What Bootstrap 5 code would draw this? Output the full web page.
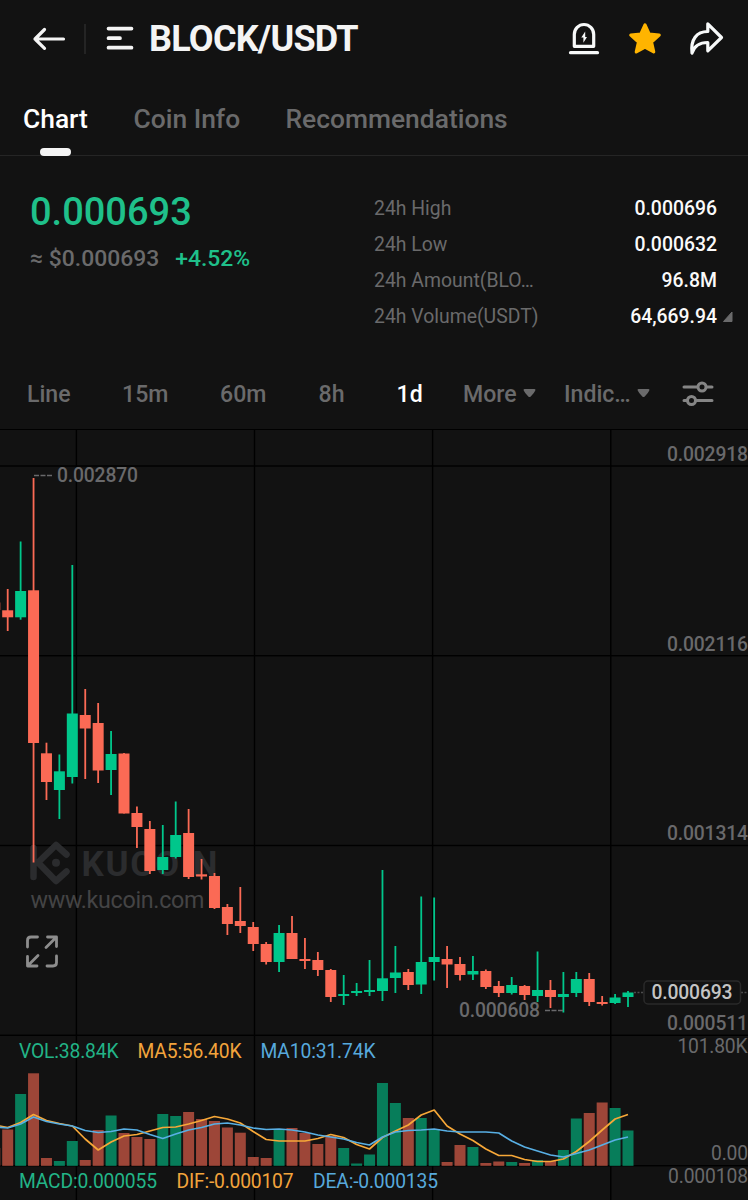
<!DOCTYPE html>
<html lang="en">
<head>
<meta charset="utf-8">
<meta name="viewport" content="width=device-width, initial-scale=1">
<title>BLOCK/USDT</title>
<link href="https://cdn.jsdelivr.net/npm/bootstrap@5.3.0/dist/css/bootstrap.min.css" rel="stylesheet">
<style>
  body { background:#121212; color:#f4f4f4; font-family:Roboto, "Liberation Sans", sans-serif; width:748px; height:1200px; overflow:hidden; }
  svg { display:block; flex:none; }
  .up { color:#1fc08a; }
  .dim { color:#6a6a6b; }
  .topbar { height:78px; padding-left:32px; padding-right:24px; }
  .rule { width:2px; height:30px; background:#242424; margin:0 20px; }
  .pair { font-size:36px; font-weight:700; letter-spacing:-.75px; line-height:42px; margin:0 0 0 15px; }
  .tabs { height:78px; border-bottom:1px solid #252525; font-size:26.4px; font-weight:500; line-height:32px; padding:25px 0 0 23px; }
  .tabs a { color:#6a6a6b; text-decoration:none; white-space:nowrap; }
  .tabs a.active { color:#fff; position:relative; }
  .tabs a.active::after { content:""; position:absolute; left:17px; top:45px; width:31px; height:8px; border-radius:4px; background:#f4f4f4; }
  .summary { height:202px; padding:35px 15px 0 30px; }
  .last { font-size:38px; font-weight:500; line-height:42px; }
  .approx { font-size:22.9px; line-height:28px; margin-top:12px; font-weight:500; }
  .stats { width:359px; font-size:19.4px; line-height:36px; }
  .stats b { font-weight:500; color:#fafafa; }
  .stats .val { margin-right:16px; }
  .periods { height:71px; padding:2px 0 0 27px; font-size:23.1px; font-weight:500; line-height:69px; white-space:nowrap; }
</style>
</head>
<body>
<header class="topbar d-flex align-items-center">
  <svg width="34" height="30" viewBox="0 0 34 30" fill="none" stroke="#f4f4f4" stroke-width="3.2" stroke-linecap="round" stroke-linejoin="round"><path d="M31.500 15H3M12.500 5.500 3 15l9.500 9.300"/></svg>
  <span class="rule" style="margin-left:18px"></span>
  <svg width="28" height="28" viewBox="0 0 28 28" stroke="#f4f4f4" stroke-width="3.700" stroke-linecap="round"><path d="M2.500 3.600H25.500M2.500 13.200H14M2.500 22.700H25.500"/></svg>
  <h1 class="pair">BLOCK/USDT</h1>
  <div class="d-flex ms-auto align-items-center">
    <svg width="32" height="38" viewBox="0 0 32 38" fill="none" stroke="#f7f9f9" stroke-linecap="round"><path d="M6.300 26.300V14.500a9.700 10 0 0 1 19.400 0v11.800z" stroke-width="3.200" stroke-linejoin="round"/><path d="M2.500 32.700h27" stroke-width="3.200"/><path d="M17.200 11.500 13.300 17.500h2.100v5.300l3.600-5.700h-1.800z" fill="#f7f9f9" stroke="none"/></svg>
    <svg style="margin-left:28px" width="34" height="38" viewBox="0 0 34 38"><path d="M17 5l4.100 9 10.100 1.100-7.700 6.900 2.200 9.900-8.700-4.700-8.700 4.700 2.200-9.900-7.700-6.900 10.100-1.100z" fill="#ffb400" stroke="#ffb400" stroke-width="3.200" stroke-linejoin="round"/></svg>
    <svg style="margin-left:26px" width="36" height="38" viewBox="0 0 36 38" fill="none" stroke="#f7f9f9" stroke-width="3.200" stroke-linejoin="round"><path d="M19.800 3.800 33.500 17.500 19.800 30.800V22.500C12 22.500 6.500 25 4 33.100 2.500 19.500 8.500 11.500 19.800 11.500z"/></svg>
  </div>
</header>

<nav class="tabs d-flex">
  <a class="active" style="width:110.500px" href="#">Chart</a>
  <a style="width:152px" href="#">Coin Info</a>
  <a href="#">Recommendations</a>
</nav>

<section class="summary d-flex justify-content-between">
  <div>
    <div class="last up">0.000693</div>
    <div class="approx d-flex"><span class="dim">≈ $0.000693</span><span class="up" style="margin-left:16px">+4.52%</span></div>
  </div>
  <div class="stats dim">
    <div class="d-flex justify-content-between"><span>24h High</span><b class="val">0.000696</b></div>
    <div class="d-flex justify-content-between"><span>24h Low</span><b class="val">0.000632</b></div>
    <div class="d-flex justify-content-between"><span>24h Amount(BLO…</span><b class="val">96.8M</b></div>
    <div class="d-flex align-items-center"><span>24h Volume(USDT)</span><b class="ms-auto">64,669.94</b>
      <svg style="margin-left:5px" width="11" height="12" viewBox="0 0 11 12"><path d="M10 1v9.500H1.500z" fill="#6a6a6b" stroke="#6a6a6b" stroke-linejoin="round"/></svg></div>
  </div>
</section>

<nav class="periods d-flex align-items-center dim">
  <span style="width:95px">Line</span><span style="width:98px">15m</span><span style="width:98.500px">60m</span><span style="width:78px">8h</span><span class="text-white" style="width:66.500px">1d</span>
  <span style="width:54px">More</span><svg style="margin:0 0 3px 6px" width="13" height="10" viewBox="0 0 13 10"><path id="caret" d="M1.500 1h10q1.500 0 .8 1.600-1.200 2.900-4.600 6-1.200 1-2.400 0Q2 5.500.7 2.600 0 1 1.500 1z" fill="#6a6a6b"/></svg>
  <span style="margin-left:28px;width:66px">Indic…</span><svg style="margin:0 0 3px 7px" width="13" height="10" viewBox="0 0 13 10"><use href="#caret"/></svg>
  <svg style="margin:0 0 2px 31px" width="34" height="30" viewBox="0 0 34 30" fill="#121212" stroke="#858585" stroke-width="3" stroke-linecap="round"><path d="M3 8h28M3 21.500h28"/><circle cx="21" cy="8" r="4"/><circle cx="10.500" cy="21.500" r="4"/></svg>
</nav>

<main><svg id="chart" width="748" height="771" viewBox="0 429 748 771" font-family="Roboto, 'Liberation Sans', sans-serif"></svg></main>

<script src="https://cdn.jsdelivr.net/npm/bootstrap@5.3.0/dist/js/bootstrap.bundle.min.js"></script>
<script>
// Each candle: direction, high, body top, body bottom, low, volume top, MA5, MA10
const rows = `r 602 602.500 610 610 1148 1125 1127
r 589 610.3 617.3 631 1129.5 1127.5 1128
g 541.5 591 617.3 619.7 1094 1122.5 1124
r 478 590.3 743 862.5 1073.3 1114.5 1117
r 742.7 753.3 782 800 1158 1120.5 1121.5
g 754.5 771.3 790 819 1161 1123.5 1124
g 565 713.5 777 783.5 1141 1126 1126
r 689 715 728.5 779 1160 1139 1130.5
r 703 723 770.5 783 1130 1150 1132.5
g 731 754 770 795 1115.5 1142 1131.5
r 753 753.5 813.5 813.5 1133 1136 1129
r 806.5 813 827 848 1137 1134.5 1130
r 821 829 871 874 1139 1131 1134.5
g 825 857 870 874 1114 1127.5 1138.5
g 801.5 835 857 858.5 1116 1127 1134
r 809 833 877 879 1112 1124 1130
r 859 874.3 876.5 879.5 1119 1120.5 1127.5
r 873 876 908 909 1121 1116.5 1124
r 904 907 924 935 1127.5 1119 1123
r 887 921 926 933 1132.7 1123 1125
r 922 927 944 951 1157 1131.5 1128
r 942 944 962 964.5 1158 1139.5 1129.5
g 925 933 962 972 1129 1141 1129
r 916 933 959 959 1128 1141 1130
r 938 959 961 969 1133 1141 1132
r 952 960 970 976 1144 1138.5 1135
r 969 970 997 1002 1136 1134.5 1137
g 975 994 996 1005 1148 1137.5 1139
g 983 991 993 996 1163.5 1144.5 1142.5
g 960 990 992 996 1154.5 1149 1145
g 870 978.3 991 1001 1083 1137.5 1137
g 946 972.5 978 993 1103 1131 1132
r 969 972 985 990 1118 1125 1130.5
g 896.5 962 984.5 994 1118 1115 1130
g 897.5 957 962 980.5 1129 1110 1129
r 946 959 964.5 988 1162 1126 1131
r 957 964 975 980.5 1145 1134 1132
g 956 971 974.5 980 1147 1140.5 1132
r 969.5 971 987 989 1163 1149 1132
r 981 986 993 997 1161.5 1155.5 1133
g 977 985 993 994.5 1162 1155.5 1141
r 985 986 995 1000 1163 1159.5 1147
g 951.5 990 996 1002 1160 1161.5 1151
r 980 990 997 1008 1161 1161.5 1155
g 972 994 997 1012.5 1150 1159 1157
g 972 979 993 997 1118.5 1151.5 1153.5
r 973 979 1002 1006 1113 1141.5 1150
r 996 1002 1004 1005.5 1102.5 1130 1145
g 994 997.5 1003 1004 1108 1119 1140
g 991 992.5 997 1007 1130.5 1114.5 1137`.split('\n').map(l => { const [k, ...n] = l.split(' '); return [k, ...n.map(Number)]; });

const candle = { r:'#fb6a55', g:'#00c78b' }, volume = { r:'#9d4638', g:'#077d5a' };
let out = '';
const rect = (x, y, w, h, f) => out += `<rect x="${x.toFixed(2)}" y="${y}" width="${w}" height="${h}" fill="${f}"/>`;
const text = (s, x, y, size, fill, w, extra = '') => out += `<text x="${x}" y="${y}" font-size="${size}" fill="${fill}" textLength="${w}" ${extra}>${s}</text>`;

// Grid
rect(0, 429, 748, 1, '#000');
[466, 655.7, 845.5, 1035.3, 1165.7].forEach(y => rect(0, y - .7, 748, 1.4, '#000'));
[76.4, 254.5, 432.6, 610.8].forEach(x => rect(x - .7, 430, 1.4, 770, '#000'));

// Watermark
out += `<g fill="none" stroke="#2b2c2e" stroke-width="6.500" stroke-linecap="round" stroke-linejoin="round"><path d="M33.500 848v29M66.500 854.500 56 845 38 862.500 56 881l10.500-9.500"/></g><circle cx="56" cy="862.800" r="4" fill="#2b2c2e"/>`;
text('KUCOIN', 81.500, 876, 35, '#2b2c2e', 136, 'font-weight="700"');
text('www.kucoin.com', 30.500, 908, 23.3, '#444445', 174);

// Candles
const cx = i => 7.7 + (i - 1) * 12.923;
rows.forEach(([k, hi, top, bot, lo], i) => {
  rect(cx(i) - .9, hi, 1.8, lo - hi, candle[k]);
  rect(cx(i) - 5.5, top, 11, bot - top, candle[k]);
});

// Volume bars with moving averages
rows.forEach((r, i) => rect(cx(i) - 5.5, r[5], 11, +(1165.8 - r[5]).toFixed(1), volume[r[0]]));
[[6, '#f7a838'], [7, '#58afe4']].forEach(([c, color]) =>
  out += `<polyline fill="none" stroke="${color}" stroke-width="1.700" stroke-linejoin="round" points="${rows.map((r, i) => cx(i).toFixed(1) + ',' + r[c]).join(' ')}"/>`);

// Labels
const axis = '#69696b';
out += `<path d="M34 475.500h18M545 1010.500h18" stroke="${axis}" stroke-width="1.600" stroke-dasharray="5 1.500"/>`;
text('0.002870', 57, 482, 19.3, axis, 81, 'font-weight="500"');
text('0.000608', 459, 1017, 19.3, axis, 81, 'font-weight="500"');
text('0.002918', 667, 461, 19.3, axis, 81, 'font-weight="500"');
text('0.002116', 667, 651, 19.3, axis, 81, 'font-weight="500"');
text('0.001314', 667, 840, 19.3, axis, 81, 'font-weight="500"');
text('0.000511', 667, 1030, 19.3, axis, 81, 'font-weight="500"');
text('101.80K', 677.500, 1053, 19.3, axis, 70);
text('0.00', 711, 1160, 19.3, axis, 37);
text('0.000108', 668, 1183, 19.3, axis, 80);

// Current price tag
out += `<path d="M634 992.500h10M741 992.500h7" stroke="#4c4c4d" stroke-width="1.500" stroke-dasharray="2 1.500"/><rect x="644" y="981" width="96.500" height="23" rx="4" fill="#121212" stroke="#2a2a2a" stroke-width="1.500"/>`;
text('0.000693', 651.500, 999, 19.3, '#c4c4c4', 81, 'font-weight="500"');

// Indicator readouts
const green = '#22b487', orange = '#f2a43c', blue = '#57a9dc';
text('VOL:38.84K', 19, 1058, 19.3, green, 99.500);
text('MA5:56.40K', 137.500, 1058, 19.3, orange, 104);
text('MA10:31.74K', 260.500, 1058, 19.3, blue, 115);
text('MACD:0.000055', 19, 1188, 19.3, green, 138);
text('DIF:-0.000107', 176.500, 1188, 19.3, orange, 117);
text('DEA:-0.000135', 313, 1188, 19.3, blue, 125);

// Expand control
out += `<path d="M37.500 937H31q-3.500 0-3.500 3.500v6.500M47.500 937H56.500V946.500M56 937.500 46 947.500M56.500 956V962.500q0 3.500-3.500 3.500H47M27.500 956.500V966H37M28 965.500 38 955.500" fill="none" stroke="#8d8d8d" stroke-width="2.800" stroke-linecap="round" stroke-linejoin="round"/>`;
document.getElementById('chart').innerHTML = out;
</script>
</body>
</html>
